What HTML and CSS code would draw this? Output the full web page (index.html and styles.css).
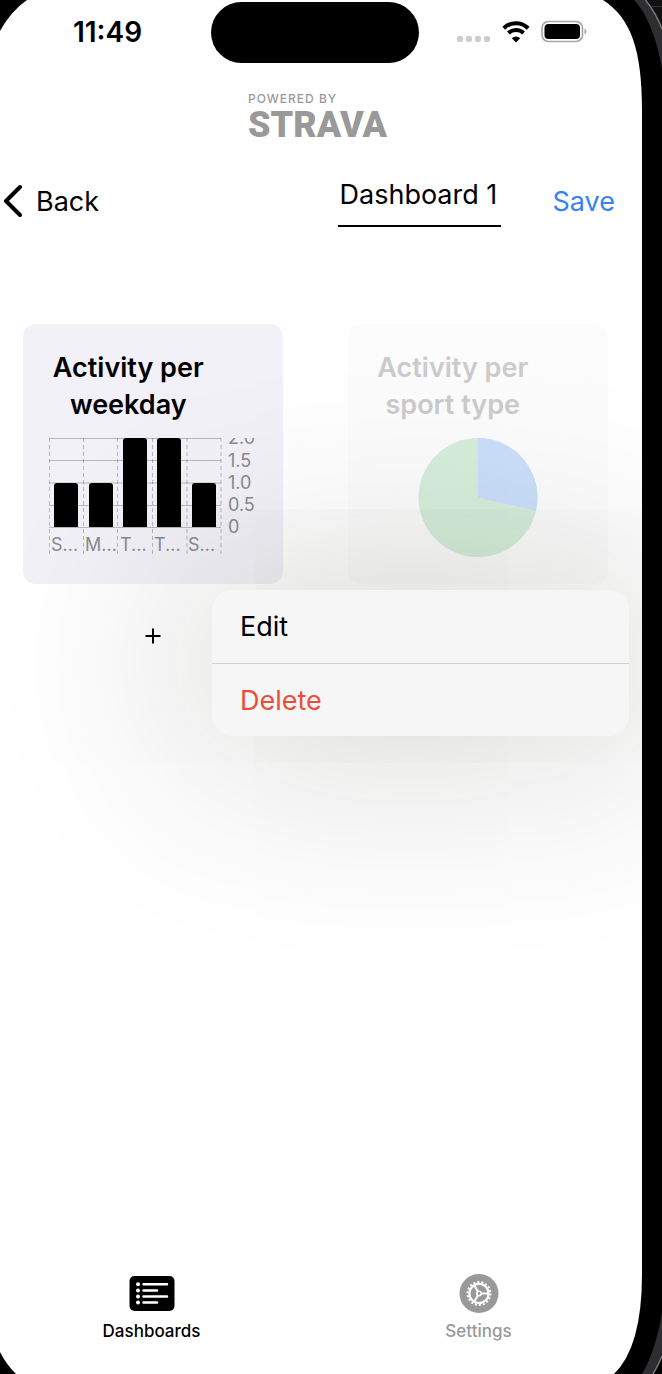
FILE: index.html
```html
<!DOCTYPE html>
<html lang="en">
<head>
<meta charset="utf-8">
<meta name="viewport" content="width=device-width, initial-scale=1">
<title>Dashboard 1</title>
<link rel="stylesheet" href="styles.css">
</head>
<body>
<div class="device">
  <div class="status">
    <span class="time">11:49</span>
    <span class="island"></span>
    <span class="indicators">
      <svg width="34" height="30" viewBox="0 0 34 30" fill="#cdcdcd" aria-hidden="true"><rect x="0" y="20" width="6" height="6" rx="2"/><rect x="9" y="20" width="6" height="6" rx="2"/><rect x="18" y="20" width="6" height="6" rx="2"/><rect x="27" y="20" width="6" height="6" rx="2"/></svg>
      <svg width="28" height="30" viewBox="0 0 28 30" fill="none" stroke="#000" stroke-width="4" aria-hidden="true"><path d="M1.8 12.2a17.4 17.4 0 0 1 24.4 0M6.4 17a11 11 0 0 1 15.2 0"/><path d="M14 26.500l-4.200-4.300a6.200 6.200 0 0 1 8.400 0z" fill="#000" stroke="none"/></svg>
      <svg width="46" height="30" viewBox="0 0 46 30" aria-hidden="true"><rect x="1" y="5.500" width="40.500" height="20" rx="6.500" fill="none" stroke="#a6a6a6" stroke-width="1.600"/><rect x="3.500" y="8" width="35.500" height="15" rx="4" fill="#000"/><path d="M43.500 12.500q2 .8 2 3t-2 3z" fill="#a6a6a6"/></svg>
    </span>
  </div>

  <div class="brand">
    <span class="powered">POWERED BY</span>
    <span class="strava">STRAVA</span>
  </div>

  <header class="toolbar">
    <button class="back" type="button">
      <svg width="20" height="34" viewBox="0 0 20 34" fill="none" stroke="#000" stroke-width="4" stroke-linecap="round" stroke-linejoin="round" aria-hidden="true"><path d="M18 3 4 17l14 14"/></svg>
      Back
    </button>
    <input class="name" type="text" value="Dashboard 1" aria-label="Dashboard name">
    <button class="save" type="button">Save</button>
  </header>

  <main class="grid">
    <article class="card">
      <h2 class="title">Activity per weekday</h2>
      <svg class="plot" width="208" height="119" viewBox="0 0 208 119" role="img" aria-label="Activity per weekday">
        <path d="M0 .5h172M0 22.500h172M0 45h172M0 67.500h172M0 89.500h172" stroke="#000" stroke-opacity=".24"/>
        <path d="M.5 0v118M34.500 0v118M68.500 0v118M103.500 0v118M138 0v118M172 0v118" stroke="#000" stroke-opacity=".24" stroke-dasharray="4 3"/>
        <path d="M5 89V48q0-3 3-3h18q3 0 3 3v41zM40 89V48q0-3 3-3h18q3 0 3 3v41zM74 89V3q0-3 3-3h18q3 0 3 3v86zM108 89V3q0-3 3-3h18q3 0 3 3v86zM143 89V48q0-3 3-3h18q3 0 3 3v41z"/>
        <g class="axis">
          <text x="179" y="6">2.0</text><text x="179" y="29">1.5</text><text x="179" y="51">1.0</text><text x="179" y="73">0.5</text><text x="179" y="95">0</text>
          <text x="2" y="113">S...</text><text x="36" y="113">M...</text><text x="71" y="113">T...</text><text x="105" y="113">T...</text><text x="139" y="113">S...</text>
        </g>
      </svg>
    </article>
    <article class="card faded">
      <h2 class="title">Activity per sport type</h2>
      <svg class="plot" width="208" height="119" viewBox="0 0 208 119" role="img" aria-label="Activity per sport type">
        <circle cx="104" cy="59.500" r="59.500" fill="#d6eedb"/>
        <path d="M104 59.500V0a59.500 59.500 0 0 1 58 72.700z" fill="#cbdffa"/>
      </svg>
    </article>
    <div class="slot">
      <button class="add" type="button" aria-label="Add">
        <svg width="16" height="16" viewBox="0 0 16 16" stroke="#000" stroke-width="2" aria-hidden="true"><path d="M8 .5v15M.5 8h15"/></svg>
      </button>
    </div>
    <div class="menu">
      <button class="item" type="button">Edit</button>
      <button class="item danger" type="button">Delete</button>
    </div>
  </main>

  <nav class="tabs">
    <a class="tab current" href="#dashboards">
      <svg width="46" height="40" viewBox="0 0 46 40" aria-hidden="true"><rect x=".5" y="3" width="45" height="35" rx="5" fill="#000"/><g fill="#fff"><circle cx="9" cy="11.300" r="2"/><circle cx="9" cy="17.400" r="2"/><circle cx="9" cy="23.500" r="2"/><circle cx="9" cy="29.500" r="2"/></g><path d="M14.500 11.300h23.500M14.500 17.400h13.500M14.500 23.500h23.500M14.500 29.500h13.500" stroke="#fff" stroke-width="2.500" stroke-linecap="round"/></svg>
      Dashboards
    </a>
    <a class="tab" href="#settings">
      <svg width="40" height="40" viewBox="0 0 40 40" fill="none" stroke="#fff" aria-hidden="true"><circle cx="20" cy="20.500" r="19.500" fill="#999" stroke="none"/><circle cx="20" cy="20.500" r="9.600" stroke-width="2.200"/><circle cx="20" cy="20.500" r="11.500" stroke-width="2" stroke-dasharray="2.010 2.004"/><circle cx="20" cy="20.500" r="2.200" stroke-width="1.600"/><path d="M22.200 20.500h7.400M18.900 18.600l-3.700-6.400M18.900 22.400l-3.700 6.400" stroke-width="1.900"/></svg>
      Settings
    </a>
  </nav>
</div>

<svg class="bezel top-left" width="28" height="32" viewBox="0 0 28 32" aria-hidden="true"><path d="M0 0h27Q11 11 0 31z"/></svg>
<svg class="bezel top-right" width="60" height="120" viewBox="0 0 60 120" aria-hidden="true">
  <path d="M1 0C29 18 40 50 40 110H60V0z"/>
  <path d="M32 0Q51 20 60 68V28Q54 13 44 0z" fill="#2e2e30"/>
  <path d="M44 0Q54 13 60 28V0z" fill="#111"/>
  <path d="M43.500 0Q54 13 60 29" fill="none" stroke="#777" stroke-width="1.500"/>
  <path d="M50 6.500h10" stroke="#333"/>
</svg>
<svg class="bezel bottom-left" width="18" height="24" viewBox="0 0 18 24" aria-hidden="true"><path d="M0 2Q6 14 16 24H0z"/></svg>
<svg class="bezel bottom-right" width="50" height="100" viewBox="0 0 50 100" aria-hidden="true">
  <path d="M30 0Q30 73 2 100H50V0z"/>
  <path d="M50 38Q44 76 30 100H41Q47 90 50 82z" fill="#2e2e30"/>
  <path d="M41 100Q47 90 50 82" fill="none" stroke="#777" stroke-width="1.500"/>
</svg>
</body>
</html>
```
FILE: styles.css
```css
* {
  box-sizing: border-box;
}

body {
  margin: 0;
  position: relative;
  background: #000;
  overflow-x: hidden;
  font-family: Inter, "Liberation Sans", sans-serif;
  font-size: 27px;
  color: #000;
}

button,
input {
  font: inherit;
  color: inherit;
  border: 0;
  padding: 0;
  background: none;
}

svg {
  display: block;
}

/* The screen bleeds past the left edge of the window */
.device {
  margin: 0 20px 0 -12px;
  min-height: 100vh;
  display: flex;
  flex-direction: column;
  background: #fff;
  overflow: hidden;
}

.status {
  display: grid;
  grid-template-columns: 1fr 208px 1fr;
  padding-top: 2px;
}

.time {
  justify-self: center;
  padding-left: 16px;
  font-size: 28px;
  line-height: 61px;
  font-weight: 600;
}

.island {
  height: 61px;
  border-radius: 31px;
  background: #000;
}

.indicators {
  display: flex;
  justify-content: center;
  gap: 11px;
  padding: 14px 17px 0 0;
}

.brand {
  width: 134px;
  margin: 29px auto 0;
  display: flex;
  flex-direction: column;
  color: #999;
}

.powered {
  font-size: 12px;
  line-height: 14px;
  font-weight: 500;
  letter-spacing: 1px;
}

.strava {
  font-family: Roboto, Inter, sans-serif;
  font-size: 36px;
  line-height: 38px;
  font-weight: 900;
}

.toolbar {
  display: flex;
  align-items: center;
  padding: 31px 27px 0 14px;
}

.back {
  display: flex;
  align-items: center;
  gap: 14px;
}

.name {
  width: 163px;
  height: 52px;
  margin-left: auto;
  padding: 0 2px 12px;
  border-bottom: 2px solid #000;
}

.save {
  margin-left: 52px;
  color: #3880f6;
}

.grid {
  display: grid;
  grid-template-columns: 1fr 1fr;
  justify-items: center;
  position: relative;
  margin-top: 97px;
  padding: 0 2px 0 3px;
}

.card {
  width: 260px;
  height: 260px;
  padding: 25px 26px;
  border-radius: 13px;
  background: #f2f1f7;
}

.title {
  width: 158px;
  margin: 0 0 15px;
  font-size: 27px;
  line-height: 37px;
  font-weight: 600;
  text-align: center;
}

.faded {
  background: #fcfcfc;
}

.faded .title {
  color: #cbcbcb;
}

.axis {
  font-size: 18px;
  fill: #8a8a8e;
}

.slot {
  padding-top: 32px;
}

.add {
  display: grid;
  place-items: center;
  width: 40px;
  height: 40px;
}

/* Context menu floats over the grid */
.menu {
  position: absolute;
  top: 266px;
  right: 13px;
  width: 417px;
  border-radius: 20px;
  background: #f6f6f6;
  box-shadow: 0 0 200px 32px rgba(20, 20, 8, 0.16);
}

.item {
  display: block;
  width: 100%;
  height: 73px;
  padding: 0 28px;
  text-align: left;
}

.danger {
  border-top: 1px solid #d0d0d0;
  color: #eb4d3d;
}

.tabs {
  display: grid;
  grid-template-columns: 1fr 1fr;
  margin-top: auto;
  padding-bottom: 33px;
}

.tab {
  display: flex;
  flex-direction: column;
  align-items: center;
  gap: 8px;
  font-size: 17px;
  line-height: 20px;
  font-weight: 500;
  color: #999;
  text-decoration: none;
}

.current {
  color: #000;
}

/* Phone frame corners drawn over the screen */
.bezel {
  position: absolute;
  pointer-events: none;
}

.top-left {
  top: 0;
  left: 0;
}

.top-right {
  top: 0;
  right: 0;
}

.bottom-left {
  bottom: 0;
  left: 0;
}

.bottom-right {
  bottom: 0;
  right: 0;
}
```
